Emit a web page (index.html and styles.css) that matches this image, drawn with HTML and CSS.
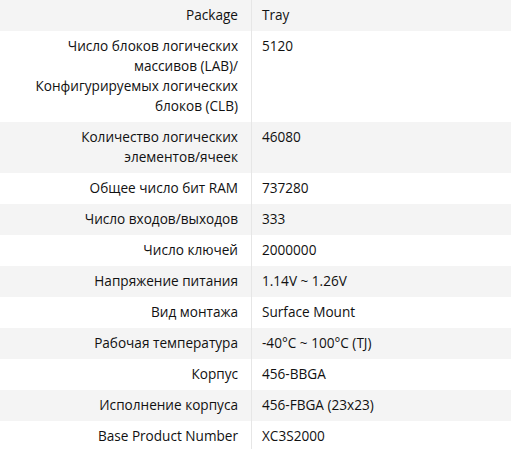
FILE: index.html
```html
<!DOCTYPE html>
<html lang="ru">
<head>
<meta charset="utf-8">
<title>Specs</title>
<link rel="stylesheet" href="styles.css">
</head>
<body>
<div class="specs">
  <div class="row"><div class="k">Package</div><div class="v">Tray</div></div>
  <div class="row"><div class="k">Число блоков логических массивов (LAB)/ Конфигурируемых логических блоков (CLB)</div><div class="v">5120</div></div>
  <div class="row"><div class="k">Количество логических элементов/ячеек</div><div class="v">46080</div></div>
  <div class="row"><div class="k">Общее число бит RAM</div><div class="v">737280</div></div>
  <div class="row"><div class="k">Число входов/выходов</div><div class="v">333</div></div>
  <div class="row"><div class="k">Число ключей</div><div class="v">2000000</div></div>
  <div class="row"><div class="k">Напряжение питания</div><div class="v">1.14V ~ 1.26V</div></div>
  <div class="row"><div class="k">Вид монтажа</div><div class="v">Surface Mount</div></div>
  <div class="row"><div class="k">Рабочая температура</div><div class="v">-40°C ~ 100°C (TJ)</div></div>
  <div class="row"><div class="k">Корпус</div><div class="v">456-BBGA</div></div>
  <div class="row"><div class="k">Исполнение корпуса</div><div class="v">456-FBGA (23x23)</div></div>
  <div class="row"><div class="k">Base Product Number</div><div class="v">XC3S2000</div></div>
</div>
</body>
</html>
```
FILE: styles.css
```css
html, body {
  margin: 0;
  padding: 0;
  background: #fff;
}
body {
  font-family: "Open Sans", "Noto Sans", sans-serif;
  font-size: 13.6px;
  line-height: 20px;
  color: #111;
}
.specs {
  display: flex;
  flex-direction: column;
  width: 511px;
}
.row {
  display: grid;
  grid-template-columns: 252px 1fr;
  background: #fff;
}
.row:nth-child(odd) {
  background: #f4f4f4;
}
.k {
  text-align: right;
  padding: 5px 13px 6px 8px;
  border-right: 1px solid #e6e6e6;
}
.v {
  padding: 5px 10px 6px 10px;
}
```
